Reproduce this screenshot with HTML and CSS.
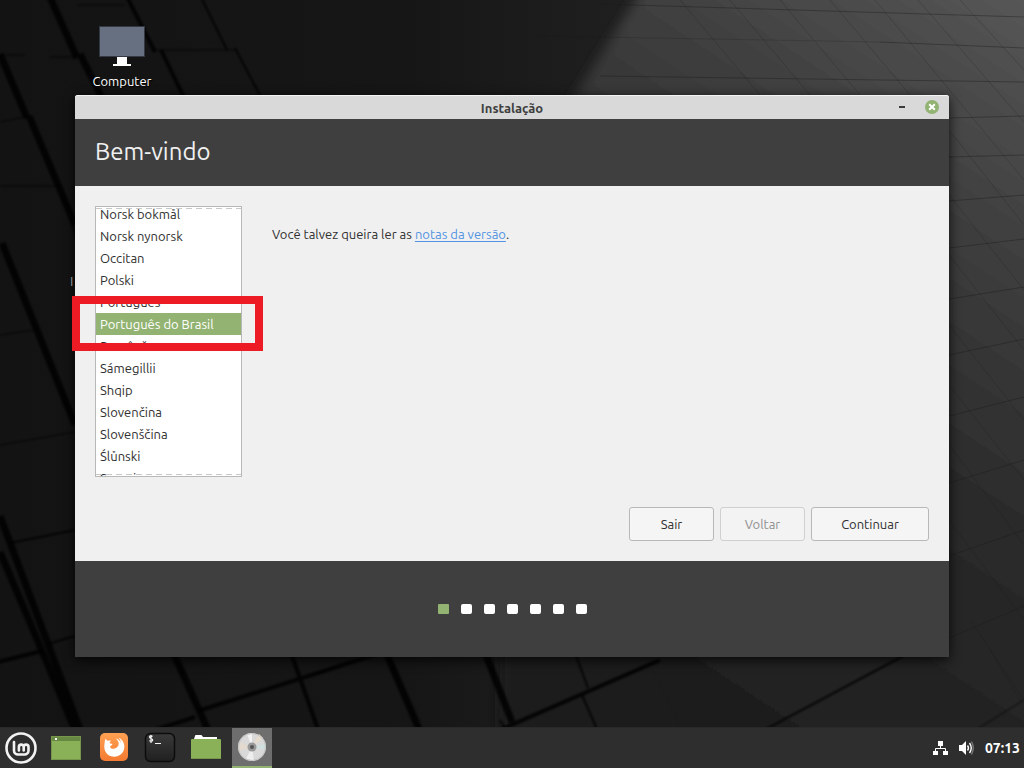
FILE: index.html
```html
<!DOCTYPE html>
<html lang="pt-BR">
<head>
<meta charset="utf-8">
<title>Instalação</title>
<link rel="stylesheet" href="styles.css">
</head>
<body>
<svg class="wallpaper" viewBox="0 0 1024 768" preserveAspectRatio="xMidYMid slice" aria-hidden="true">
  <defs>
    <linearGradient id="base" x1="0" y1="0" x2="1" y2="0">
      <stop offset="0" stop-color="#131313"/><stop offset=".4" stop-color="#161616"/><stop offset=".6" stop-color="#1f1f1f"/><stop offset="1" stop-color="#262626"/>
    </linearGradient>
    <linearGradient id="light" gradientUnits="userSpaceOnUse" x1="1024" y1="0" x2="600" y2="640">
      <stop offset="0" stop-color="#565656"/><stop offset=".3" stop-color="#3d3d3d"/><stop offset=".6" stop-color="#2a2a2a"/><stop offset="1" stop-color="#1e1e1e"/>
    </linearGradient>
    <filter id="soft"><feGaussianBlur stdDeviation="6"/></filter>
    <filter id="edge"><feGaussianBlur stdDeviation="1"/></filter>
  </defs>
  <rect width="1024" height="768" fill="url(#base)"/>
  <path d="M648-20L566 110L500 640L500 800L1060 800V-20z" fill="url(#light)" filter="url(#soft)"/>
  <g stroke="#050505" stroke-opacity=".85" fill="none" filter="url(#edge)">
    <path stroke-width="7" d="M49-5L77 58M80 54L108 110M0 54L27 118M29 116L75 225M2 243L75 425M0 516L48 644L82 735M0 552L42 651L77 735M172 650L200 712L210 735M385 650L425 743M484 650L512 722"/>
    <path stroke-width="4" d="M126-5L155 52M161 50L190 110M-2 662L42 651M470 743L660 660M198 711L296 680L380 653M155 730L195 717M290 650L320 735"/>
    <path stroke-width="2" d="M200-5L227 50M235 48L265 105M574 650L588 688M582 695L603 743M740 743L905 655M10 543L75 530M48 644L75 636M500 720L513 743M70 218L80 250"/>
    <path stroke-width="1" d="M0 55H25M0 122L30 116M0 186H60M50 57H78M155 50H235M0 445L75 432M0 335L35 330M78 5H125M955 743L1024 700"/>
  </g>
  <g stroke="#1b1b1b" stroke-opacity=".4" fill="none">
    <path d="M880 42L1024 48M600 4L1024 17M600 76L1024 82M949 118L1024 116M949 157L1024 155M949 201L1024 195M949 248L1024 239M949 299L1024 287M949 355L1024 339M949 416L1024 397M949 483L1024 460M949 556L1024 530M949 638L1024 606"/>
    <path stroke-opacity=".2" d="M540 36L880 42M680 0L760 95M730 0L810 95M780 0L860 95M830 0L910 95M875 0L1024 180M918 0L1024 122M960 0L1024 70M949 130L1024 225M949 195L1024 290M949 255L1024 350M949 325L1024 420M949 385L1024 480M949 445L1024 545M949 520L1024 620M970 620L1024 700M990 650L1021 702M650 665L685 735"/>
  </g>
</svg>

<main class="desktop">
  <a class="shortcut" href="#computer">
    <svg width="46" height="42" viewBox="0 0 46 42" aria-hidden="true">
      <rect x=".5" y=".5" width="45" height="30" fill="#677080" stroke="#343842"/>
      <path d="M18 31h10v7h4v2H14v-2h4z" fill="#fff"/>
    </svg>
    <span>Computer</span>
  </a>
  <span class="hidden-shortcut">I</span>

  <section class="window" aria-labelledby="window-title">
    <header class="titlebar">
      <h1 id="window-title">Instalação</h1>
      <div class="controls">
        <button type="button" aria-label="Minimizar"><svg width="14" height="14" viewBox="0 0 14 14"><path d="M4 6h6v2H4z" fill="#3c3c3c"/></svg></button>
        <button type="button" aria-label="Fechar"><svg width="14" height="14" viewBox="0 0 14 14"><circle cx="7" cy="7" r="7" fill="#92b372"/><path d="M4.200 4.200l5.600 5.600m0-5.600l-5.600 5.600" stroke="#fff" stroke-width="2"/></svg></button>
      </div>
    </header>
    <h2 class="banner">Bem-vindo</h2>
    <div class="content">
      <div class="columns">
        <div class="picker">
          <div class="viewport">
            <ul class="languages" role="listbox" aria-label="Idioma">
              <li role="option">Norsk bokmål</li>
              <li role="option">Norsk nynorsk</li>
              <li role="option">Occitan</li>
              <li role="option">Polski</li>
              <li role="option">Português</li>
              <li role="option" class="selected" aria-selected="true">Português do Brasil</li>
              <li role="option">Română</li>
              <li role="option">Sámegillii</li>
              <li role="option">Shqip</li>
              <li role="option">Slovenčina</li>
              <li role="option">Slovenščina</li>
              <li role="option">Ślůnski</li>
              <li role="option">Suomi</li>
            </ul>
          </div>
          <div class="highlight"></div>
        </div>
        <p class="notes">Você talvez queira ler as <a href="#notas">notas da versão</a>.</p>
      </div>
      <div class="actions">
        <button type="button">Sair</button>
        <button type="button" disabled>Voltar</button>
        <button type="button" class="wide">Continuar</button>
      </div>
    </div>
    <footer class="steps">
      <i class="step current"></i><i class="step"></i><i class="step"></i><i class="step"></i><i class="step"></i><i class="step"></i><i class="step"></i>
    </footer>
  </section>
</main>

<nav class="panel" aria-label="Painel">
  <button type="button" class="launcher" aria-label="Menu">
    <svg width="40" height="40" viewBox="0 0 40 40"><g fill="none" stroke="#f2f2f2"><circle cx="19" cy="20" r="14.500" stroke-width="2.600"/><path stroke-width="2.600" stroke-linecap="round" d="M12 14v8.500a4 4 0 0 0 4 4h6.500a4 4 0 0 0 4-4v-3.500a2.400 2.400 0 0 0-4.800 0v3.500m0-3.500a2.400 2.400 0 0 0-4.800 0v3.500"/></g></svg>
  </button>
  <button type="button" class="launcher" aria-label="Mostrar área de trabalho">
    <svg width="40" height="40" viewBox="0 0 40 40"><path d="M3 8h30v24H3z" fill="#8bb158"/><path d="M3 8h30v5H3z" fill="#678843"/><path d="M7 10h2v2H7z" fill="#fff"/><path d="M3.500 8.500h29v23h-29z" fill="none" stroke="#75964b"/></svg>
  </button>
  <button type="button" class="launcher" aria-label="Firefox">
    <svg width="40" height="40" viewBox="0 0 40 40"><defs><linearGradient id="fx" x2="0" y2="1"><stop stop-color="#ffa052"/><stop offset="1" stop-color="#f47b31"/></linearGradient></defs><rect x="6" y="5" width="28" height="28" rx="5" fill="url(#fx)"/><path d="M11.500 10.500q.8 1.800 2.300 2.200 1.700-.6 3.200 0-1.500 1-1.500 2.500l3 .7q-.2 1.300-2.500 2.300c.2 2.300 2.500 3.200 4.800 2.200 3-1 4.600-3.400 3.600-6.400q-.8-2.200-2.600-3.500 3.700.8 5.200 4.500-.3-3-2.200-5.200c3.800 2 5.900 5.500 5.500 10-.6 5.300-4.900 9-10 9-5.600 0-10-4.300-10-9.800 0-2.600.3-5.500 1.200-8.500z" fill="#fff"/></svg>
  </button>
  <button type="button" class="launcher" aria-label="Terminal">
    <svg width="40" height="40" viewBox="0 0 40 40"><defs><linearGradient id="tm" x2="0" y2="1"><stop stop-color="#3a3a3a"/><stop offset="1" stop-color="#202020"/></linearGradient></defs><rect x="5.500" y="5.500" width="29" height="28" rx="5" fill="url(#tm)" stroke="#0c0c0c" stroke-width="1.500"/><path d="M12.500 8.500c-1-1-3-.7-3 .6 0 1.700 3.200 1.200 3.200 2.900 0 1.400-2.300 1.600-3.400.6M11 7v8M15 15.500h6" fill="none" stroke="#f4f4f4" stroke-width="1.200"/></svg>
  </button>
  <button type="button" class="launcher" aria-label="Arquivos">
    <svg width="40" height="40" viewBox="0 0 40 40"><path d="M8 11l1-3q0-1 1-1h5q1 0 2 2h14v3H8z" fill="#fff"/><rect x="5" y="11" width="30" height="20" rx="1" fill="#8bb158"/><path d="M5 30h30v1H5z" fill="#75964b"/></svg>
  </button>
  <button type="button" class="launcher active" aria-label="Instalação">
    <svg width="40" height="40" viewBox="0 0 40 40"><circle cx="20" cy="19" r="14" fill="#d9d9d9"/><path d="M20 19L7 14q-1 4 0 9z" fill="#e3d9cf"/><path d="M20 19L15 6l5-1z" fill="#f3f3f3"/><path d="M20 19L33 16v6z" fill="#cfe0de"/><path d="M20 19L31 10l-4-4z" fill="#e6dccd"/><path d="M20 19L22 33l-8-2z" fill="#eee"/><circle cx="20" cy="19" r="13.500" fill="none" stroke="#c4c4c4"/><circle cx="20" cy="19" r="4.500" fill="#999"/><circle cx="20" cy="19" r="2" fill="#555"/></svg>
  </button>
  <div class="tray">
    <button type="button" aria-label="Rede"><svg width="16" height="16" viewBox="0 0 16 16"><path d="M5 1h5v5H5zM0 11h5v4H0zM10 11h5v4h-5z" fill="#fff"/><path d="M7.500 6v2.500M2.500 11V8.500h10V11" stroke="#fff" fill="none"/></svg></button>
    <button type="button" aria-label="Volume"><svg width="16" height="16" viewBox="0 0 16 16"><path d="M0 5h3l4-4v14l-4-4H0z" fill="#fff"/><path d="M8.500 5.500q2 2.500 0 5M10.500 3q3.500 5 0 10" stroke="#fff" stroke-width="1.400" fill="none"/><path d="M12.500 1.500q3.500 6.500 0 13" stroke="#7a7a7a" stroke-width="1.400" fill="none"/></svg></button>
    <time>07:13</time>
  </div>
</nav>
</body>
</html>
```
FILE: styles.css
```css
* { box-sizing: border-box; }

body {
  margin: 0;
  min-height: 100vh;
  display: flex;
  flex-direction: column;
  position: relative;
  overflow: hidden;
  background: #151515;
  color: #303030;
  font: 13px/22px "Ubuntu", "Noto Sans", sans-serif;
}

button { font: inherit; color: inherit; }

.wallpaper {
  position: absolute;
  inset: 0;
  width: 100%;
  height: 100%;
  z-index: -1;
}

.desktop {
  flex: 1;
  position: relative;
  display: flex;
  flex-direction: column;
  align-items: flex-start;
  padding: 26px 75px 70px;
}

.shortcut {
  display: flex;
  flex-direction: column;
  align-items: center;
  gap: 2px;
  width: 94px;
  margin-bottom: 3px;
  color: #fff;
  text-decoration: none;
  text-shadow: 1px 1px 1px #000;
}

.hidden-shortcut {
  position: absolute;
  left: 70px;
  top: 270px;
  color: #bbb;
}

.window {
  position: relative;
  align-self: stretch;
  flex: 1;
  display: flex;
  flex-direction: column;
  border-radius: 3px 3px 0 0;
  background: #f0f0f0;
  box-shadow: 0 3px 12px rgba(0, 0, 0, .8);
}

.titlebar {
  display: grid;
  grid-template-columns: 1fr auto 1fr;
  align-items: center;
  height: 24px;
  padding: 0 10px;
  border-top: 1px solid #f4f4f4;
  border-radius: 3px 3px 0 0;
  background: #d9d9d9;
}

.titlebar h1 {
  grid-column: 2;
  margin: 0;
  font-size: 13px;
  font-weight: 700;
  line-height: 24px;
  color: #3f3f3f;
}

.controls {
  display: flex;
  justify-content: flex-end;
  gap: 16px;
}

.controls button, .tray button {
  display: flex;
  padding: 0;
  border: 0;
  background: none;
}

.controls button { margin-bottom: 2px; }

.banner {
  margin: 0;
  padding: 16px 20px 17px;
  background: #3f3f3f;
  color: #f0f0f0;
  font-size: 24px;
  font-weight: 400;
  line-height: 34px;
}

.content {
  flex: 1;
  display: flex;
  flex-direction: column;
  justify-content: space-between;
  padding: 20px;
}

.columns { display: flex; gap: 30px; }

.picker { position: relative; width: 147px; }

.viewport {
  position: relative;
  height: 271px;
  overflow: hidden;
  border: 1px solid #b8b8b8;
  background: #fff;
}

.viewport::before, .viewport::after {
  content: "";
  position: absolute;
  left: 0;
  right: 0;
  height: 1px;
  background: repeating-linear-gradient(90deg, #c8c8c8 0 6px, transparent 6px 10px);
}

.viewport::before { top: 1px; }
.viewport::after { bottom: 1px; }

.languages {
  margin: -4px 0 0;
  padding: 0;
  list-style: none;
}

.languages li { padding-left: 4px; white-space: nowrap; }

.languages .selected { background: #92b372; color: #fff; }

.highlight {
  position: absolute;
  left: -23px;
  right: -21px;
  top: 90px;
  height: 55px;
  border: 8px solid #ed1c24;
}

.notes { margin: 17px 0 0; }
.notes a { color: #5294e2; text-underline-offset: 2px; }

.actions {
  display: flex;
  justify-content: flex-end;
  gap: 6px;
}

.actions button {
  min-width: 85px;
  height: 34px;
  padding: 0 16px;
  border: 1px solid #b8b8b8;
  border-radius: 3px;
  background: #f5f5f5;
}

.actions .wide { min-width: 118px; }
.actions button:disabled { border-color: #d0d0d0; background: #f3f3f3; color: #909090; }

.steps {
  display: flex;
  justify-content: center;
  align-items: center;
  gap: 12px;
  height: 96px;
  background: #3f3f3f;
}

.step {
  width: 11px;
  height: 10px;
  border-radius: 2px;
  background: #fff;
}

.step.current { background: #92b372; border-radius: 1px; }

.panel {
  display: flex;
  align-items: stretch;
  gap: 6px;
  height: 41px;
  padding: 0 4px 0 2px;
  border-top: 1px solid #292929;
  background: #2e2e2e;
}

.launcher {
  width: 40px;
  padding: 0;
  border: 0;
  background: none;
}

.launcher svg { display: block; }

.launcher.active { background: #6e6e6e; box-shadow: inset 0 -2px #92b372; }

.tray {
  display: flex;
  align-items: center;
  gap: 10px;
  margin-left: auto;
  color: #fff;
  font-weight: 700;
}

.tray time { font-size: 14px; }
```
